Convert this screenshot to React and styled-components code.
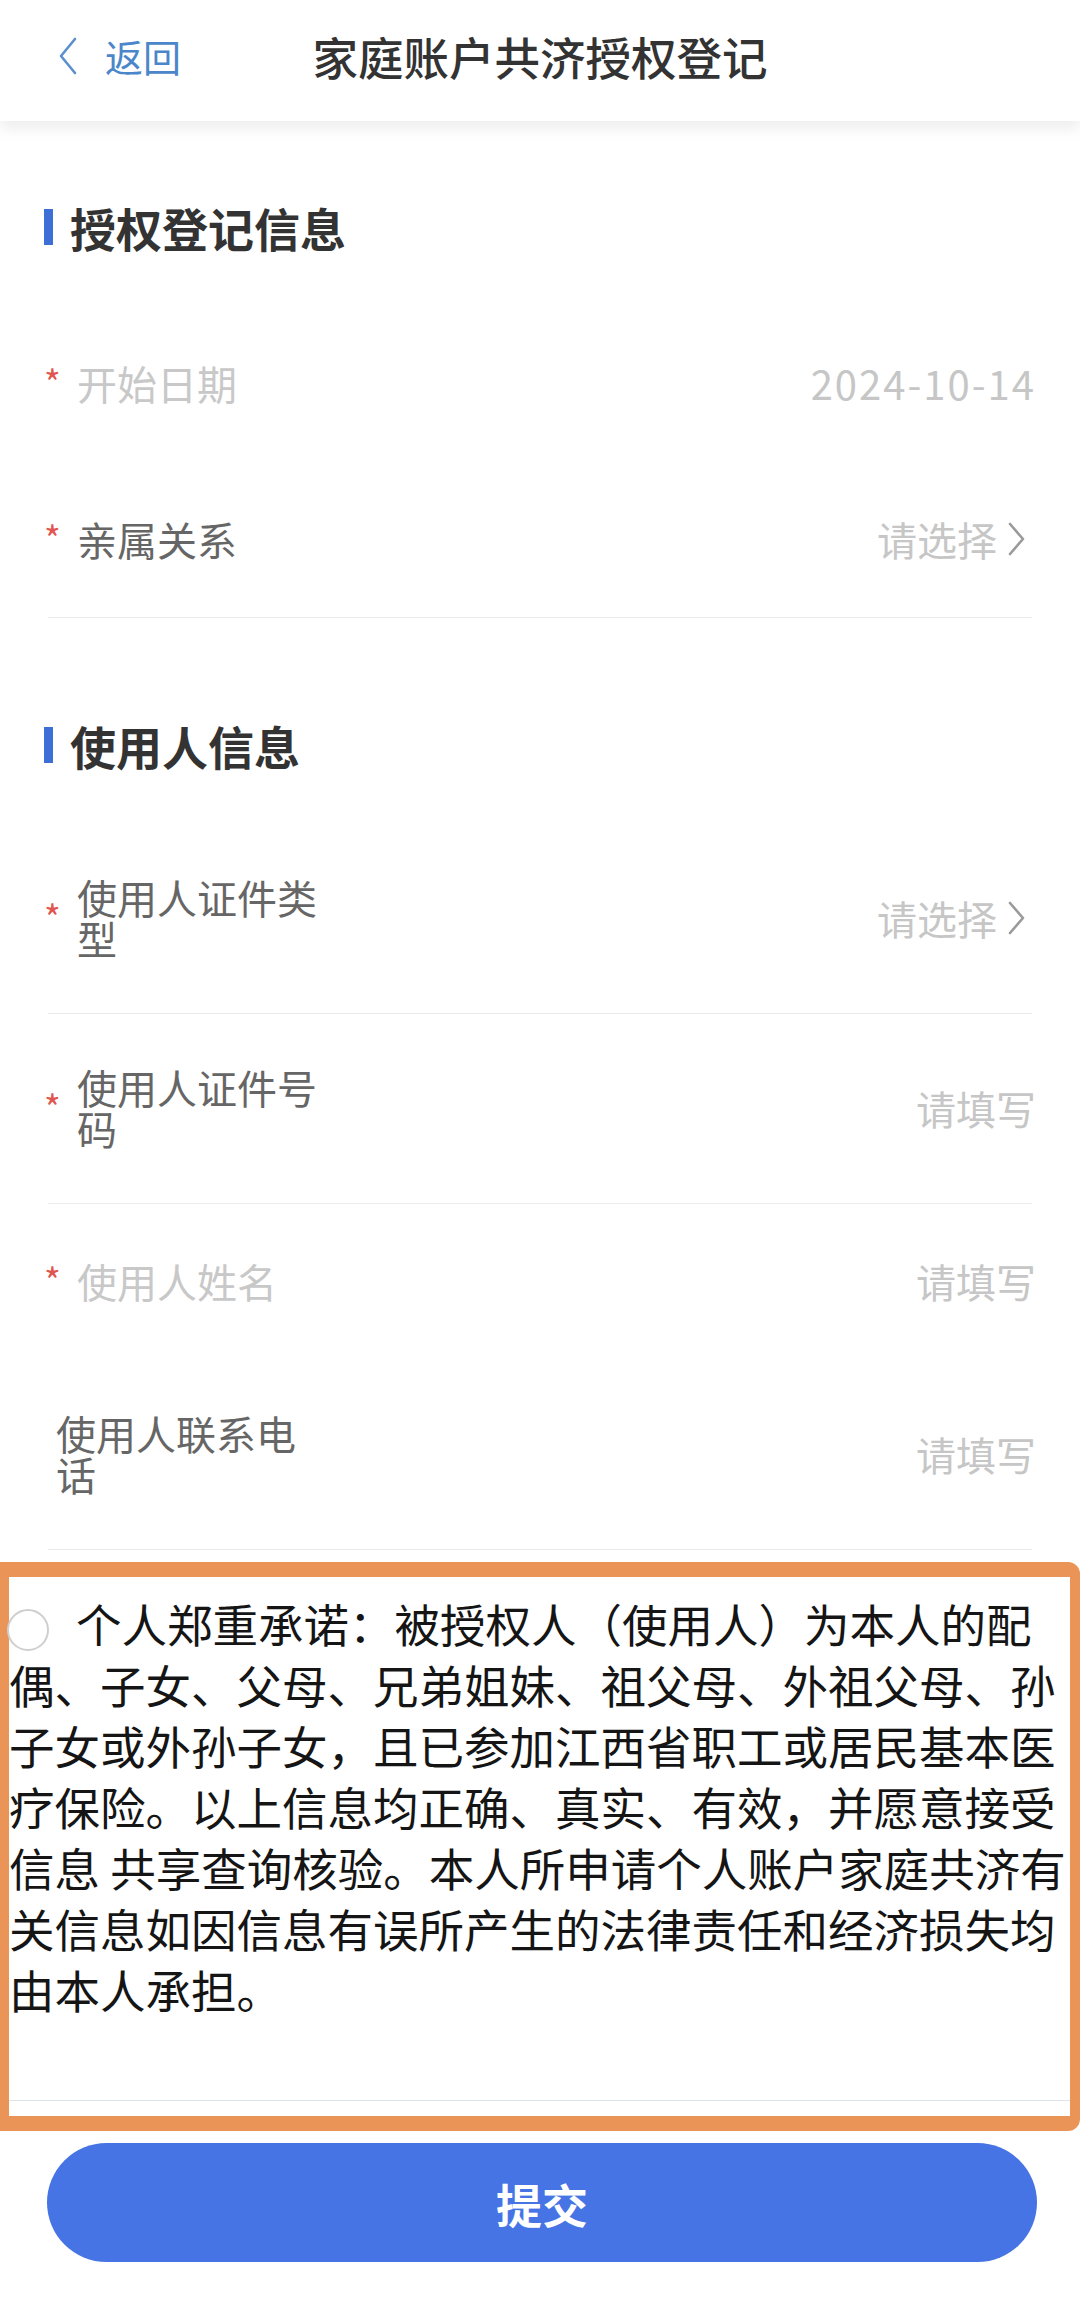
import styled, { createGlobalStyle } from "styled-components"

const Global = createGlobalStyle`
body{
    margin: 0;
    background: #fff;
    font-family: "Noto Sans CJK SC", "Noto Sans", sans-serif;
    overflow-x: hidden;
}
`

const Chevron = ({ color = "#9a9a9a", w = 22, h = 36 }) => (
    <svg width={w} height={h} viewBox="0 0 22 36" fill="none">
        <polyline points="5,3 18,18 5,33" stroke={color} strokeWidth="2.6" strokeLinecap="round" strokeLinejoin="round" />
    </svg>
)

const BackArrow = () => (
    <svg width="20" height="38" viewBox="0 0 20 38" fill="none">
        <polyline points="17,2 3,19 17,36" stroke="#5b8fd0" strokeWidth="2.6" strokeLinecap="round" strokeLinejoin="round" />
    </svg>
)

const Field = ({ label, value, required, disabled, select, line, wide }) => (
    <Row line={line}>
        {required ? <Star>*</Star> : <NoStar />}
        <Label disabled={disabled}>{label}</Label>
        <Value wide={wide}>
            {value}
            {select && <ArrowBox><Chevron /></ArrowBox>}
        </Value>
    </Row>
)

const App = () => {
    return (
        <Page>
            <Global />
            <Header>
                <Back>
                    <BackArrow />
                    <span>返回</span>
                </Back>
                <Title>家庭账户共济授权登记</Title>
                <div />
            </Header>

            <SectionTitle first>授权登记信息</SectionTitle>
            <Field label="开始日期" value="2024-10-14" required disabled wide />
            <Field label="亲属关系" value="请选择" required select line />

            <SectionTitle>使用人信息</SectionTitle>
            <Field label="使用人证件类型" value="请选择" required select line />
            <Field label="使用人证件号码" value="请填写" required line />
            <Field label="使用人姓名" value="请填写" required disabled />
            <Field label="使用人联系电话" value="请填写" line />

            <Highlight>
                <Agreement>
                    <Radio />
                    个人郑重承诺：被授权人（使用人）为本人的配偶、子女、父母、兄弟姐妹、祖父母、外祖父母、孙子女或外孙子女，且已参加江西省职工或居民基本医疗保险。以上信息均正确、真实、有效，并愿意接受信息 共享查询核验。本人所申请个人账户家庭共济有关信息如因信息有误所产生的法律责任和经济损失均由本人承担。
                </Agreement>
            </Highlight>

            <Submit>提交</Submit>
        </Page>
    )
}

export default App

const Page = styled.div`
width: 1080px;
min-height: 2307px;
background: #fff;
`

const Header = styled.div`
height: 121px;
box-sizing: border-box;
padding-bottom: 10px;
display: grid;
grid-template-columns: 1fr auto 1fr;
align-items: center;
background: #fff;
box-shadow: 0 8px 14px rgba(0, 0, 0, 0.07);
position: relative;
`

const Back = styled.div`
display: flex;
align-items: center;
gap: 27px;
padding-left: 58px;
color: #4a86c9;
font-size: 38px;
line-height: 44px;
`

const Title = styled.div`
font-size: 45.5px;
font-weight: 500;
color: #333;
line-height: 56px;
`

const SectionTitle = styled.div`
display: flex;
align-items: center;
gap: 17px;
padding: ${(p) => (p.first ? "76px" : "97px")} 44px 49px;
font-size: 46px;
font-weight: 700;
color: #333;
line-height: 60px;

&::before{
    content: "";
    width: 9px;
    height: 36px;
    background: #3d6fd6;
}
`

const Row = styled.div`
display: flex;
align-items: center;
margin: 0 44px;
padding: 53px 0 55px;
position: relative;

&::after{
    content: "";
    position: absolute;
    left: 4px;
    right: 4px;
    bottom: 0;
    height: 1px;
    background: ${(p) => (p.line ? "#ececec" : "transparent")};
}
`

const Star = styled.span`
width: 33px;
flex-shrink: 0;
color: #e05550;
font-size: 36px;
line-height: 40px;
margin-top: -4px;
`

const NoStar = styled.span`
width: 12px;
flex-shrink: 0;
`

const Label = styled.div`
width: 244px;
flex-shrink: 0;
font-size: 40px;
line-height: 41px;
color: ${(p) => (p.disabled ? "#c8c8c8" : "#666")};
`

const Value = styled.div`
flex: 1;
display: flex;
align-items: center;
justify-content: flex-end;
min-height: 48px;
font-size: 40px;
line-height: 48px;
letter-spacing: ${(p) => (p.wide ? "2px" : "0")};
color: #c6c6c6;
`

const ArrowBox = styled.span`
display: flex;
margin-left: 8px;
margin-right: 9px;
`

const Highlight = styled.div`
margin-top: 12px;
border-style: solid;
border-color: #ea9457;
border-width: 15px 10px 15px 9px;
border-radius: 0 12px 12px 0;
background: #fff;
`

const Agreement = styled.div`
padding: 16px 0 80px;
border-bottom: 1px solid #dde3e8;
margin-bottom: 15px;
font-size: 45.5px;
line-height: 61px;
color: #151515;
`

const Radio = styled.span`
display: inline-block;
width: 42px;
height: 42px;
border: 2px solid #cfcfcf;
border-radius: 50%;
box-sizing: border-box;
margin-left: -2px;
margin-right: 27px;
vertical-align: -8px;
`

const Submit = styled.button`
display: block;
width: 990px;
height: 119px;
margin: 12px 0 0 47px;
border: none;
border-radius: 60px;
background: #4674e4;
color: #fff;
font-family: "Noto Sans CJK SC", sans-serif;
font-size: 46px;
font-weight: 700;
`
